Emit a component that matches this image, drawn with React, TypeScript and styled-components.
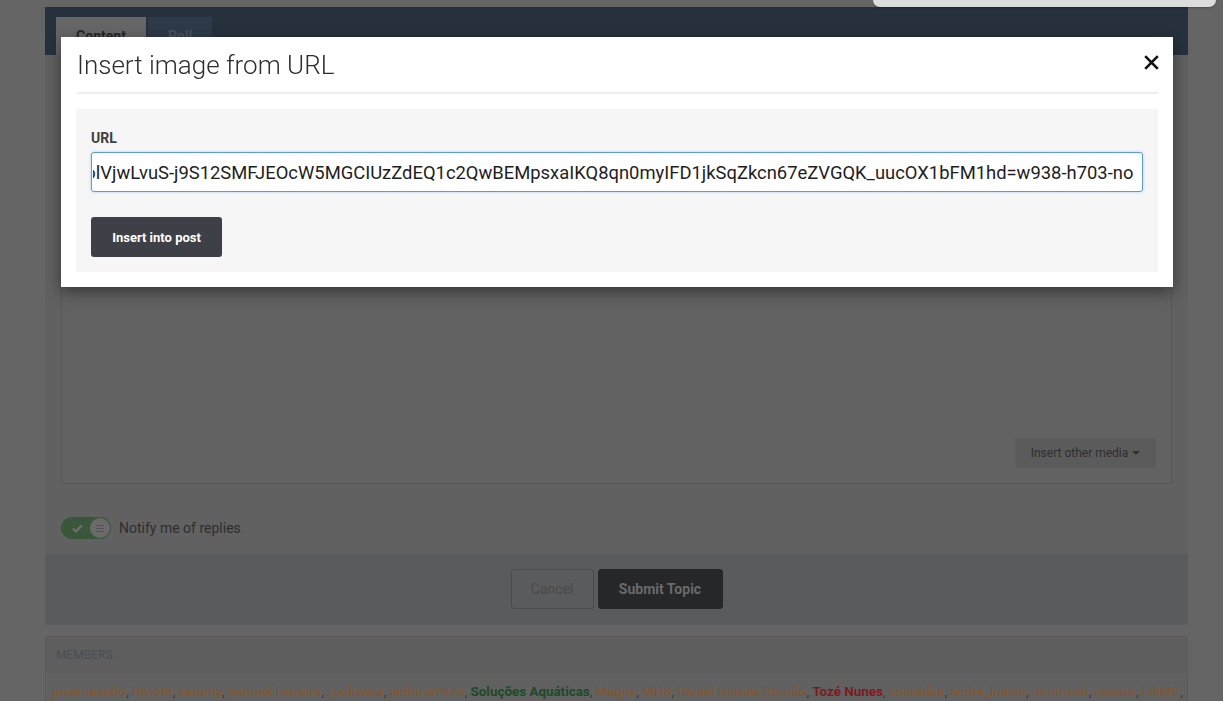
import React, { useLayoutEffect, useRef } from "react";
import styled, { createGlobalStyle } from "styled-components";

const GlobalStyle = createGlobalStyle`
  html, body {
    margin: 0;
    padding: 0;
    background: #656565;
    font-family: Roboto, "Noto Sans", Arial, sans-serif;
    overflow: hidden;
  }
  * { box-sizing: border-box; }
`;

const Page = styled.div`
  width: 1223px;
  height: 701px;
  padding: 7px 0 0 45px;
  overflow: hidden;
`;

const FormBox = styled.div`
  width: 1143px;
  display: flex;
  flex-direction: column;
`;

const TabBar = styled.div`
  height: 48px;
  background: #27313d;
  display: flex;
  align-items: flex-end;
  gap: 2px;
  padding-left: 11px;
`;

const Tab = styled.div<{ $active?: boolean; $w: number }>`
  width: ${(p) => p.$w}px;
  height: 38px;
  display: flex;
  align-items: center;
  justify-content: center;
  font-size: 14px;
  font-weight: 700;
  background: ${(p) => (p.$active ? "#666666" : "#2e3a48")};
  color: ${(p) => (p.$active ? "#262626" : "#46525f")};
`;

const FormBody = styled.div`
  background: #616161;
  padding: 16px 16px 15px;
  display: flex;
  flex-direction: column;
  gap: 33px;
`;

const Editor = styled.div`
  height: 413px;
  border: 1px solid #575757;
  background: #626262;
  display: flex;
  flex-direction: column;
  justify-content: flex-end;
  align-items: flex-end;
  padding: 0 15px 15px 0;
`;

const MediaButton = styled.div`
  width: 141px;
  height: 30px;
  background: #5b5b5b;
  border-radius: 2px;
  display: flex;
  align-items: center;
  justify-content: center;
  gap: 4px;
  font-size: 12px;
  color: #2f2f2f;
`;

const Caret = styled.span`
  width: 0;
  height: 0;
  border-left: 4px solid transparent;
  border-right: 4px solid transparent;
  border-top: 4px solid #2f2f2f;
`;

const ToggleRow = styled.div`
  display: flex;
  align-items: center;
  gap: 8px;
  font-size: 14px;
  color: #2e2e2e;
`;

const Toggle = styled.div`
  width: 50px;
  height: 22px;
  border-radius: 11px;
  background: #3a573b;
  display: flex;
  align-items: center;
  justify-content: space-between;
  padding: 0 1px 0 11px;
`;

const Knob = styled.div`
  width: 20px;
  height: 20px;
  border-radius: 50%;
  background: #6a6a6a;
  display: flex;
  align-items: center;
  justify-content: center;
`;

const FormFooter = styled.div`
  height: 71px;
  background: #5a5b5d;
  border-radius: 0 0 3px 3px;
  display: flex;
  justify-content: center;
  align-items: flex-start;
  padding-top: 15px;
  gap: 4px;
`;

const FooterButton = styled.div<{ $primary?: boolean }>`
  height: 40px;
  width: ${(p) => (p.$primary ? "125px" : "83px")};
  white-space: nowrap;
  display: flex;
  align-items: center;
  justify-content: center;
  border-radius: 3px;
  font-size: 14px;
  font-weight: ${(p) => (p.$primary ? 700 : 400)};
  border: 1px solid ${(p) => (p.$primary ? "#262729" : "#4b4b4b")};
  background: ${(p) => (p.$primary ? "#262729" : "transparent")};
  color: ${(p) => (p.$primary ? "#6a6a6a" : "#4a4a4a")};
`;

const Members = styled.div`
  margin-top: 11px;
  border: 1px solid #5b5b5b;
  border-radius: 3px;
  background: #616161;
`;

const MembersHead = styled.div`
  height: 36px;
  background: #5e5e5e;
  display: flex;
  align-items: center;
  padding-left: 10px;
  font-size: 12px;
  color: #4a4f55;
`;

const MembersList = styled.div`
  padding: 11px 7px;
  font-size: 13.4px;
  color: #3a3a3a;
  white-space: nowrap;
`;

const Name = styled.span<{ $kind?: "green" | "red" }>`
  color: ${(p) =>
    p.$kind === "green" ? "#1d4a26" : p.$kind === "red" ? "#7a1b22" : "#87562a"};
  font-weight: ${(p) => (p.$kind ? 700 : 400)};
`;

const Notice = styled.div`
  position: fixed;
  top: 0;
  left: 873px;
  width: 343px;
  height: 7px;
  background: #dcdcdc;
  border-radius: 0 0 8px 8px;
  box-shadow: 0 1px 2px rgba(0, 0, 0, 0.25);
  z-index: 20;
`;

const ModalLayer = styled.div`
  position: fixed;
  inset: 0;
  z-index: 10;
`;

const Modal = styled.div`
  position: absolute;
  top: 37px;
  left: 61px;
  width: 1112px;
  background: #ffffff;
  box-shadow: 0 5px 15px rgba(0, 0, 0, 0.45);
  padding: 0 15px 15px 15px;
  display: flex;
  flex-direction: column;
`;

const ModalHeader = styled.div`
  height: 57px;
  display: flex;
  align-items: center;
  justify-content: space-between;
  border-bottom: 2px solid #eeeeee;
  margin-left: 1px;
`;

const Title = styled.h1`
  margin: 0;
  font-size: 26px;
  font-weight: 300;
  color: #2e2e2e;
  line-height: normal;
`;

const CloseButton = styled.button`
  border: 0;
  background: none;
  padding: 0;
  margin: 0 -1px 4px 0;
  width: 15px;
  height: 15px;
  display: flex;
  cursor: pointer;
`;

const InnerPanel = styled.div`
  margin-top: 15px;
  background: #f6f6f6;
  padding: 20px 15px 15px;
  display: flex;
  flex-direction: column;
  align-items: flex-start;
`;

const Label = styled.label`
  font-size: 14px;
  line-height: 18px;
  font-weight: 700;
  color: #404040;
  margin-bottom: 5px;
`;

const UrlInput = styled.input`
  width: 100%;
  height: 40px;
  border: 1px solid #5b9cd6;
  border-radius: 3px;
  box-shadow: 0 0 3px rgba(91, 156, 214, 0.45);
  padding: 0 9px 0 1px;
  font-family: Roboto, Arial, sans-serif;
  font-size: 18.4px;
  color: #1e1e1e;
  background: #fff;
  outline: none;
  margin-bottom: 25px;
`;

const InsertButton = styled.button`
  width: 131px;
  height: 40px;
  border: 0;
  border-radius: 3px;
  background: #3d4046;
  color: #ffffff;
  font-family: Roboto, Arial, sans-serif;
  font-size: 13px;
  font-weight: 700;
  cursor: pointer;
`;

const URL_VALUE =
  "https://lh3.googleusercontent.com/5_xYZe3B9aKmWqOH8bLpN2tFv0olVjwLvuS-j9S12SMFJEOcW5MGCIUzZdEQ1c2QwBEMpsxaIKQ8qn0myIFD1jkSqZkcn67eZVGQK_uucOX1bFM1hd=w938-h703-no";

const members: { n: string; k?: "green" | "red" }[] = [
  { n: "josemacedo" },
  { n: "DiGoM" },
  { n: "sammy" },
  { n: "Samuel Ferreira" },
  { n: "zpoliveira" },
  { n: "jadoma1975" },
  { n: "Soluções Aquáticas", k: "green" },
  { n: "Magns" },
  { n: "MHS" },
  { n: "Daniel Gomes Romão" },
  { n: "Tozé Nunes", k: "red" },
  { n: "conrados" },
  { n: "andre_inacio" },
  { n: "mmmcsd" },
  { n: "osanto" },
  { n: "EdiMC" },
];

export default function App() {
  const inputRef = useRef<HTMLInputElement>(null);
  useLayoutEffect(() => {
    const el = inputRef.current;
    if (!el) return;
    el.focus();
    el.setSelectionRange(URL_VALUE.length, URL_VALUE.length);
    el.scrollLeft = el.scrollWidth;
  }, []);

  return (
    <>
      <GlobalStyle />
      <Page>
        <FormBox>
          <TabBar>
            <Tab $active $w={90}>Content</Tab>
            <Tab $w={64}>Poll</Tab>
          </TabBar>
          <FormBody>
            <Editor>
              <MediaButton>
                Insert other media <Caret />
              </MediaButton>
            </Editor>
            <ToggleRow>
              <Toggle>
                <svg width="11" height="9" viewBox="0 0 11 9">
                  <path d="M1 4.6 L4 7.4 L10 1.4" stroke="#6b6b6b" strokeWidth="2.4" fill="none" />
                </svg>
                <Knob>
                  <svg width="8" height="7" viewBox="0 0 8 7">
                    <path d="M0 0.5 H8 M0 3.5 H8 M0 6.5 H8" stroke="#545454" strokeWidth="1" />
                  </svg>
                </Knob>
              </Toggle>
              Notify me of replies
            </ToggleRow>
          </FormBody>
          <FormFooter>
            <FooterButton>Cancel</FooterButton>
            <FooterButton $primary>Submit Topic</FooterButton>
          </FormFooter>
          <Members>
            <MembersHead>MEMBERS</MembersHead>
            <MembersList>
              {members.map((m, i) => (
                <React.Fragment key={i}>
                  <Name $kind={m.k}>{m.n}</Name>,{" "}
                </React.Fragment>
              ))}
            </MembersList>
          </Members>
        </FormBox>
      </Page>
      <ModalLayer>
        <Modal>
          <ModalHeader>
            <Title>Insert image from URL</Title>
            <CloseButton aria-label="Close">
              <svg width="15" height="15" viewBox="0 0 15 15">
                <path d="M1.2 1.2 L13.8 13.8 M13.8 1.2 L1.2 13.8" stroke="#111" strokeWidth="2.6" />
              </svg>
            </CloseButton>
          </ModalHeader>
          <InnerPanel>
            <Label htmlFor="url">URL</Label>
            <UrlInput id="url" ref={inputRef} defaultValue={URL_VALUE} />
            <InsertButton>Insert into post</InsertButton>
          </InnerPanel>
        </Modal>
      </ModalLayer>
      <Notice />
    </>
  );
}
